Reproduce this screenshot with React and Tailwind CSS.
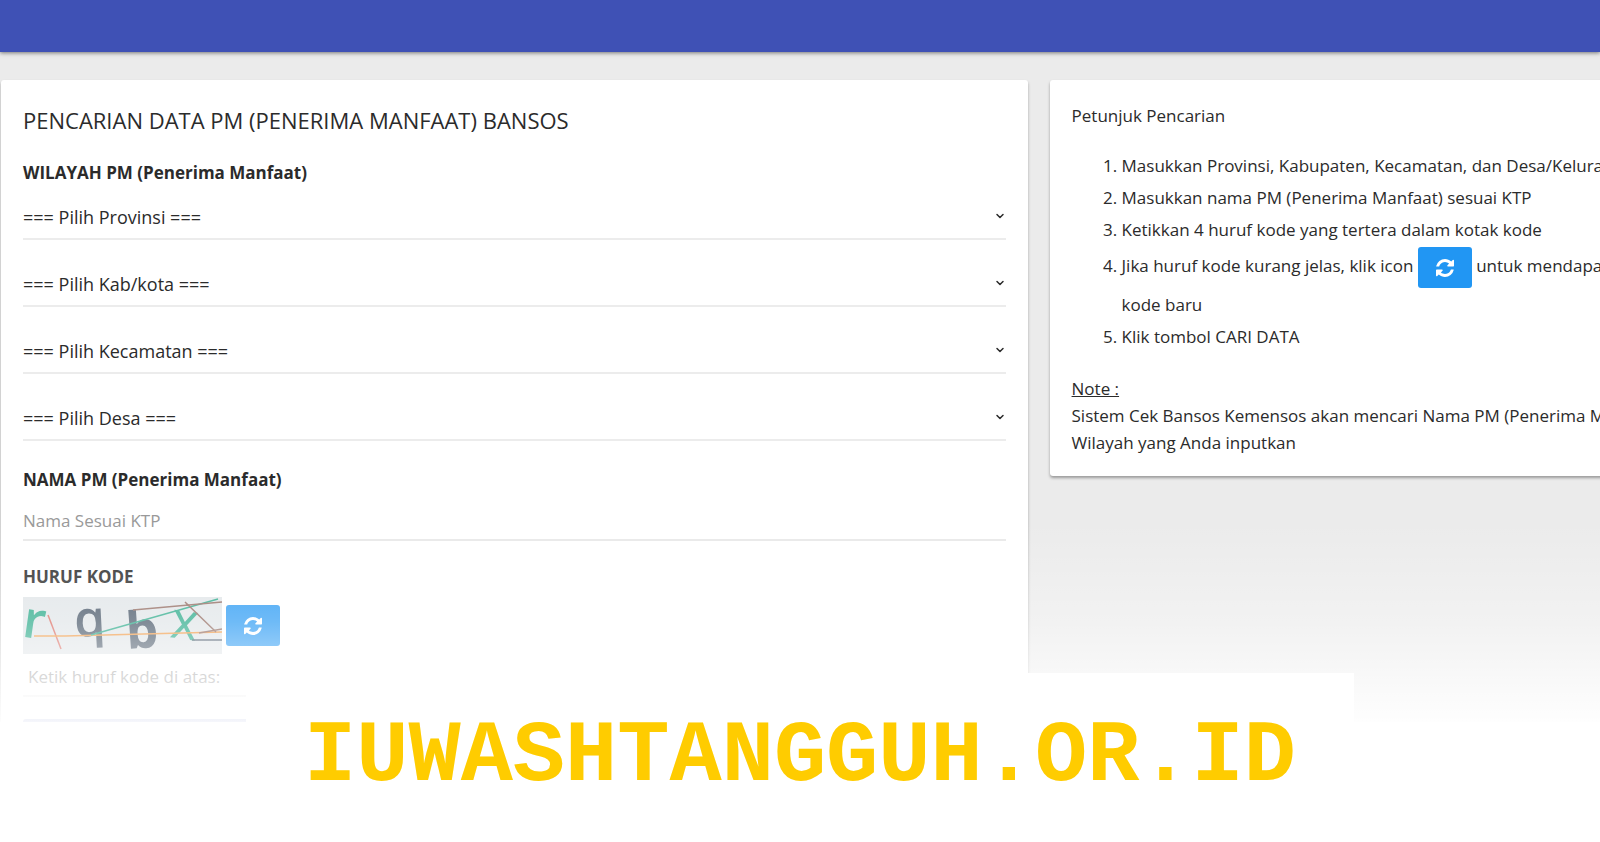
import { ChevronDown } from "lucide-react";

const regions = [
  { id: "provinsi", label: "=== Pilih Provinsi ===" },
  { id: "kabkota", label: "=== Pilih Kab/kota ===" },
  { id: "kecamatan", label: "=== Pilih Kecamatan ===" },
  { id: "desa", label: "=== Pilih Desa ===" },
];

const RefreshIcon = () => (
  <svg viewBox="0 0 1536 1536" className="h-[18px] w-[18px]" fill="currentColor" aria-hidden="true">
    <path d="M1511 928q0 5-1 7-64 268-268 434.5t-478 166.5q-146 0-282.5-55t-243.5-157l-129 129q-19 19-45 19t-45-19-19-45v-448q0-26 19-45t45-19h448q26 0 45 19t19 45-19 45l-137 137q71 66 161 102t187 36q134 0 250-65t186-179q11-17 53-117 8-23 30-23h192q13 0 22.5 9.5t9.5 22.5zm25-800v448q0 26-19 45t-45 19h-448q-26 0-45-19t-19-45 19-45l138-138q-148-137-349-137-134 0-250 65t-186 179q-11 17-53 117-8 23-30 23h-199q-13 0-22.5-9.5t-9.5-22.5v-7q65-268 270-434.5t480-166.5q146 0 284 55.5t245 156.5l130-129q19-19 45-19t45 19 19 45z" />
  </svg>
);

const RefreshButton = () => (
  <button
    type="button"
    aria-label="Refresh kode"
    className="my-px inline-flex h-[41px] w-[54px] items-center justify-center rounded-[3px] bg-[#2196f3] align-middle text-white"
  >
    <RefreshIcon />
  </button>
);

const RegionSelect = ({ id, label }) => (
  <div className="relative mb-[27px] border-b-2 border-[#ececec]">
    <select
      id={id}
      aria-label={id}
      className="block h-[38px] w-full appearance-none bg-transparent pb-1 text-lg outline-none"
    >
      <option>{label}</option>
    </select>
    <ChevronDown className="pointer-events-none absolute top-[10px] right-0 h-3 w-3" strokeWidth={3} />
  </div>
);

const Captcha = () => (
  <svg viewBox="0 0 199 57" className="h-[57px] w-[199px] bg-[#dfe4e7]" role="img" aria-label="Huruf kode">
    <g fontFamily="Open Sans, sans-serif">
      <text x="-2" y="40" fontSize="52" fontWeight="600" fill="#1fa583" transform="rotate(8 2 40)">r</text>
      <text x="52" y="40" fontSize="50" fontWeight="600" fill="#3e4e60" transform="rotate(-3 52 40)">q</text>
      <text x="104" y="52" fontSize="51" fontWeight="700" fill="#3e4e60" transform="rotate(-4 104 52)">b</text>
      <text x="146" y="40" fontSize="52" fill="#1fa583" transform="rotate(8 146 40)">x</text>
    </g>
    <g fill="none" strokeWidth="1.5">
      <path d="M25 18L38 52" stroke="#d96459" />
      <path d="M11 39H42L199 35" stroke="#f0943a" />
      <path d="M68 38L195 2" stroke="#1fa583" />
      <path d="M110 13L199 5M162 5L193 35M176 36L199 32" stroke="#8b6257" />
      <path d="M169 43H199" stroke="#3e4e60" />
    </g>
  </svg>
);

const SearchCard = () => (
  <section className="w-[64.2%] shrink-0 rounded-[3px] bg-white px-[22px] pt-[22px] pb-6 shadow-[0_2px_3px_rgba(0,0,0,0.3)]">
    <h1 className="text-[22px] leading-9">PENCARIAN DATA PM (PENERIMA MANFAAT) BANSOS</h1>
    <h2 className="mt-[23px] mb-[15px] leading-6 font-bold">WILAYAH PM (Penerima Manfaat)</h2>
    {regions.map((region) => (
      <RegionSelect key={region.id} id={region.id} label={region.label} />
    ))}
    <label htmlFor="nama" className="block leading-6 font-bold">
      NAMA PM (Penerima Manfaat)
    </label>
    <input
      id="nama"
      placeholder="Nama Sesuai KTP"
      className="mt-[9px] block h-[40px] w-full border-b-2 border-[#e9e9e9] outline-none placeholder:text-[#999]"
    />
    <label htmlFor="kode" className="mt-6 mb-2 block leading-6 font-bold">
      HURUF KODE
    </label>
    <div className="flex items-center gap-1">
      <Captcha />
      <RefreshButton />
    </div>
    <input
      id="kode"
      placeholder="Ketik huruf kode di atas:"
      className="block h-[43px] w-full border-b-2 border-[#e9e9e9] px-[5px] pt-[3px] outline-none placeholder:text-[#888]"
    />
    <button
      type="button"
      aria-label="Cari data"
      className="mt-[22px] block h-[41px] w-full rounded-[3px] bg-[#3f51b5]"
    />
  </section>
);

const GuideCard = () => (
  <section className="w-[38%] shrink-0 self-start rounded-[3px] bg-white px-[22px] pt-6 pb-5 whitespace-nowrap shadow-[0_2px_3px_rgba(0,0,0,0.35)]">
    <p className="leading-6">Petunjuk Pencarian</p>
    <ol className="my-[22px] list-decimal pl-[50px] leading-8">
      <li>Masukkan Provinsi, Kabupaten, Kecamatan, dan Desa/Kelurahan</li>
      <li>Masukkan nama PM (Penerima Manfaat) sesuai KTP</li>
      <li>Ketikkan 4 huruf kode yang tertera dalam kotak kode</li>
      <li>
        Jika huruf kode kurang jelas, klik icon <RefreshButton /> untuk mendapatkan huruf
        <br />
        kode baru
      </li>
      <li>Klik tombol CARI DATA</li>
    </ol>
    <p className="leading-[27px]">
      <u>Note :</u>
      <br />
      Sistem Cek Bansos Kemensos akan mencari Nama PM (Penerima Manfaat) sesuai
      <br />
      Wilayah yang Anda inputkan
    </p>
  </section>
);

const App = () => {
  return (
    <div className="relative min-h-screen overflow-hidden bg-[#ebebeb] font-['Open_Sans','Noto_Sans',sans-serif] text-[17px] text-[#2b2b2b]">
      <header className="h-[52px] bg-[#3f51b5] shadow-[0_1px_4px_rgba(0,0,0,0.5)]" />
      <main className="flex gap-[22px] pt-7 pb-5 pl-px">
        <SearchCard />
        <GuideCard />
      </main>
      <div className="pointer-events-none absolute inset-x-0 bottom-[120px] h-[200px] bg-linear-to-b from-white/0 via-white/35 to-white/95" />
      <div className="absolute inset-x-0 bottom-0 h-[120px] bg-white" />
      <footer className="absolute inset-x-0 bottom-0 mx-auto flex h-[169px] w-[69.2%] items-center justify-center bg-white">
        <p className="font-['Liberation_Mono',monospace] text-[87px] leading-none font-bold text-[#ffcc00]">
          IUWASHTANGGUH.OR.ID
        </p>
      </footer>
    </div>
  );
};

export default App;
